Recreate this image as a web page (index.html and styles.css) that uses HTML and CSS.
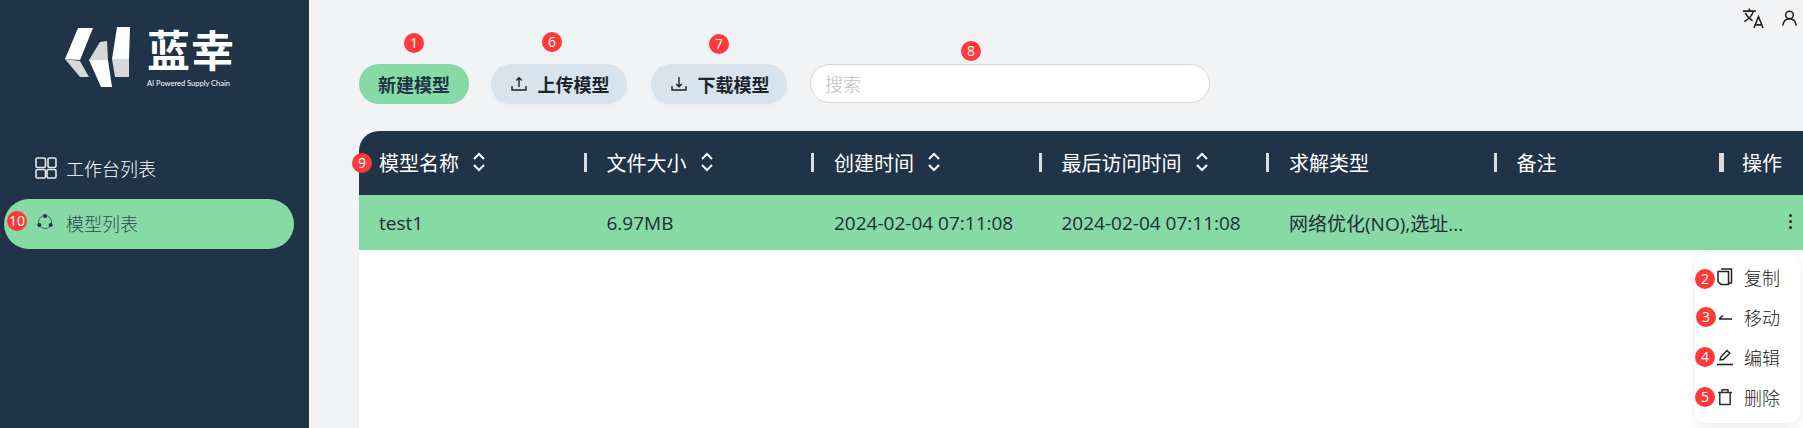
FILE: index.html
```html
<!DOCTYPE html>
<html lang="zh">
<head>
<meta charset="utf-8">
<title>模型列表</title>
<link rel="stylesheet" href="styles.css">
</head>
<body>
<div class="app">
  <aside class="sidebar">
    <div class="logo">
      <svg class="logo-mark" width="70" height="62" viewBox="0 0 70 62">
        <path d="M13 1H28L15 33L0 32Z" fill="#fff"/>
        <path d="M0 32L15 34L24 50H15Z" fill="#d5d9dc"/>
        <path d="M35 15L42 14L43 33H24Z" fill="#d5d9dc"/>
        <path d="M24 33H43L47 60H36Z" fill="#fff"/>
        <path d="M52 0H65L64 32H47Z" fill="#fff"/>
        <path d="M47 32H64V50H50Z" fill="#d5d9dc"/>
      </svg>
      <div class="logo-text">
        <div class="logo-name">蓝幸</div>
        <div class="logo-sub">AI Powered Supply Chain</div>
      </div>
    </div>
    <nav class="nav">
      <div class="nav-item">
        <svg class="nav-icon" width="22" height="22" viewBox="0 0 22 22" fill="none" stroke="#e6e9ec" stroke-width="1.6">
          <rect x="1" y="1" width="9.5" height="9.5" rx="1.5"/>
          <rect x="13" y="1" width="8" height="9.5" rx="1.5"/>
          <rect x="1" y="12.5" width="9.5" height="8.5" rx="1.5"/>
          <rect x="12" y="12.5" width="9" height="8.5" rx="1.5"/>
        </svg>
        <span>工作台列表</span>
      </div>
      <div class="nav-item active">
        <span class="badge badge-10">10</span>
        <svg class="nav-icon" width="22" height="22" viewBox="0 0 22 22" fill="none" stroke="#4a6670" stroke-width="1">
          <circle cx="10" cy="10" r="6.5"/>
          <circle cx="10" cy="4" r="2" fill="#203347" stroke="none"/>
          <circle cx="4.3" cy="13" r="2" fill="#203347" stroke="none"/>
          <circle cx="15.7" cy="13" r="2" fill="#203347" stroke="none"/>
        </svg>
        <span>模型列表</span>
      </div>
    </nav>
  </aside>
  <main class="main">
    <div class="topbar">
      <svg width="22" height="22" viewBox="0 0 24 24" fill="none" stroke="#222" stroke-width="1.7">
        <path d="M1 4.5H15M8 1.5V4.5M12.5 4.5C11 9 7 13.5 2.5 16M3.5 6.5C5.5 10.5 8 13 11.5 15"/>
        <path d="M13 23L18 10.5L23 23M14.5 19.5H21.5"/>
      </svg>
      <svg width="17" height="18" viewBox="0 0 20 20" fill="none" stroke="#222" stroke-width="1.8">
        <circle cx="10" cy="6.5" r="4.5"/>
        <path d="M2 19C3 13.5 6.5 11 10 11S17 13.5 18 19"/>
      </svg>
    </div>
    <div class="toolbar">
      <button class="btn btn-green"><span class="badge badge-1">1</span>新建模型</button>
      <button class="btn btn-blue">
        <span class="badge badge-6">6</span>
        <svg width="16" height="16" viewBox="0 0 16 16" fill="none" stroke="#222" stroke-width="1.4"><path d="M8 11V2M5.2 4.6L8 1.8L10.8 4.6M1 10V14H15V10"/></svg>
        上传模型
      </button>
      <button class="btn btn-blue">
        <span class="badge badge-7">7</span>
        <svg width="16" height="16" viewBox="0 0 16 16" fill="none" stroke="#222" stroke-width="1.4"><path d="M8 1V10.5M5.2 8L8 10.8L10.8 8M1 10V14H15V10"/></svg>
        下载模型
      </button>
      <div class="search">
        <span class="badge badge-8">8</span>
        <input class="search-input" placeholder="搜索">
      </div>
    </div>
    <section class="table">
      <div class="thead">
        <div class="th"><span class="badge badge-9">9</span><span class="th-text">模型名称</span><svg class="sort" width="14" height="20" viewBox="0 0 14 20" fill="none" stroke="#fff" stroke-width="2"><path d="M2 7L7 2L12 7M2 13L7 18L12 13"/></svg></div>
        <div class="th"><span class="th-text">文件大小</span><svg class="sort" width="14" height="20" viewBox="0 0 14 20" fill="none" stroke="#fff" stroke-width="2"><path d="M2 7L7 2L12 7M2 13L7 18L12 13"/></svg></div>
        <div class="th"><span class="th-text">创建时间</span><svg class="sort" width="14" height="20" viewBox="0 0 14 20" fill="none" stroke="#fff" stroke-width="2"><path d="M2 7L7 2L12 7M2 13L7 18L12 13"/></svg></div>
        <div class="th"><span class="th-text">最后访问时间</span><svg class="sort" width="14" height="20" viewBox="0 0 14 20" fill="none" stroke="#fff" stroke-width="2"><path d="M2 7L7 2L12 7M2 13L7 18L12 13"/></svg></div>
        <div class="th"><span class="th-text">求解类型</span></div>
        <div class="th th-wide"><span class="th-text">备注</span></div>
        <div class="th th-last"><span class="th-text">操作</span></div>
      </div>
      <div class="trow">
        <div class="td">test1</div>
        <div class="td">6.97MB</div>
        <div class="td">2024-02-04 07:11:08</div>
        <div class="td">2024-02-04 07:11:08</div>
        <div class="td">网络优化(NO),选址...</div>
        <div class="td"></div>
        <div class="td td-last"><span class="dots"><i></i><i></i><i></i></span></div>
      </div>
      <div class="menu">
        <div class="menu-item">
          <span class="badge badge-2">2</span>
          <svg width="16" height="18" viewBox="0 0 16 18" fill="none" stroke="#222" stroke-width="1.5"><path d="M4 1H14.5V15H12"/><path d="M1 3.5H11.5V16.5H4L1 13.5Z"/></svg>
          <span>复制</span>
        </div>
        <div class="menu-item">
          <span class="badge badge-3">3</span>
          <svg width="16" height="18" viewBox="0 0 16 18" fill="none" stroke="#222" stroke-width="1.5"><path d="M2 11H15M2 11L6 7.5"/></svg>
          <span>移动</span>
        </div>
        <div class="menu-item">
          <span class="badge badge-4">4</span>
          <svg width="16" height="18" viewBox="0 0 16 18" fill="none" stroke="#222" stroke-width="1.4"><path d="M3 12L3.8 9L10 2.5L12.8 5.2L6.3 11.5Z"/><path d="M0 16.5H16" stroke-width="1.6"/></svg>
          <span>编辑</span>
        </div>
        <div class="menu-item">
          <span class="badge badge-5">5</span>
          <svg width="16" height="18" viewBox="0 0 16 18" fill="none" stroke="#333" stroke-width="1.5"><path d="M1 4.5H15M5 4.5V1.8H11V4.5M2.8 4.5V16.5H13.2V4.5"/></svg>
          <span>删除</span>
        </div>
      </div>
    </section>
  </main>
</div>
</body>
</html>
```
FILE: styles.css
```css
* { box-sizing: border-box; }
html, body { margin: 0; height: 100%; overflow: hidden; }
body {
  font-family: "Open Sans", "Noto Sans CJK SC", sans-serif;
  background: #f2f3f5;
  color: #222;
}
.app { display: flex; height: 428px; }

.sidebar {
  width: 309px;
  flex: none;
  background: #203347;
  display: flex;
  flex-direction: column;
  padding-top: 27px;
}
.logo { display: flex; justify-content: flex-start; padding-left: 65px; gap: 12px; height: 117px; }
.logo-mark { flex: none; }
.logo-text { display: flex; flex-direction: column; }
.logo-name {
  font-size: 43px;
  line-height: 42px;
  font-weight: 700;
  color: #fff;
  letter-spacing: 1px;
  font-family: "Noto Sans CJK SC", sans-serif;
}
.logo-sub { font-size: 7.5px; line-height: 10px; color: #fff; margin-top: 10px; white-space: nowrap; font-family: "Lato", sans-serif; }

.nav { display: flex; flex-direction: column; padding-left: 4px; }
.nav-item {
  position: relative;
  width: 290px;
  height: 50px;
  display: flex;
  align-items: center;
  gap: 9px;
  padding: 0 0 2px 31px;
  font-size: 18px;
  font-weight: 300;
  color: #fff;
  font-family: "Noto Sans CJK SC", sans-serif;
  margin-bottom: 5px;
}
.nav-icon { flex: none; }
.nav-item.active { background: #87d9a5; color: #2f4a56; border-radius: 25px; }

.main { flex: 1; min-width: 0; position: relative; padding-left: 50px; display: flex; flex-direction: column; }
.topbar {
  position: absolute;
  top: 7px;
  right: 5px;
  display: flex;
  gap: 17px;
  align-items: center;
}
.toolbar { display: flex; align-items: flex-start; padding-top: 64px; gap: 24px; height: 131px; }
.btn {
  position: relative;
  height: 40px;
  border: none;
  border-radius: 20px;
  font: 700 18px "Noto Sans CJK SC", sans-serif;
  color: #203347;
  display: flex;
  align-items: center;
  justify-content: center;
  padding: 0;
}
.btn-green { width: 110px; background: #87d9a5; margin-right: -2px; }
.btn-blue { width: 136px; background: #d7e3ed; color: #1b2530; gap: 11px; padding-left: 2px; box-shadow: 0 2px 4px rgba(0,0,0,.04); }
.search { position: relative; margin-left: -1px; }
.search-input {
  display: block;
  width: 400px;
  height: 39px;
  border: 1px solid #d8d8d8;
  border-radius: 20px;
  background: #fff;
  padding: 0 14px 2px;
  font: 300 18px "Noto Sans CJK SC", sans-serif;
  outline: none;
}
.search-input::placeholder { color: #c0c0c0; }

.table { flex: 1; background: #fff; position: relative; border-top-left-radius: 20px; }
.thead, .trow { display: grid; grid-template-columns: repeat(6, 227.5px) 1fr; }
.thead { height: 64px; background: #203347; border-top-left-radius: 20px; }
.trow { height: 55px; background: #87d9a5; }
.th {
  position: relative;
  display: flex;
  align-items: center;
  gap: 13px;
  padding: 0 0 2px 20px;
  color: #fff;
  font-size: 20px;
  font-family: "Noto Sans CJK SC", sans-serif;
}
.th::after {
  content: "";
  position: absolute;
  right: 0;
  top: 22px;
  width: 3px;
  height: 19px;
  background: #dcdcdc;
}
.th-wide::after { width: 5px; }
.th-last { padding-left: 18px; }
.th-last::after { display: none; }
.td {
  display: flex;
  align-items: center;
  padding-left: 20px;
  font-size: 19px;
  font-family: "Open Sans", "Noto Sans CJK SC", sans-serif;
  color: #222d38;
  white-space: nowrap;
}
.td-last { justify-content: flex-end; padding-right: 11px; }
.dots { display: flex; flex-direction: column; gap: 3px; padding-bottom: 3px; }
.dots i { display: block; width: 3px; height: 3px; border-radius: 50%; background: #222; }

.menu {
  position: absolute;
  right: 3px;
  top: 123px;
  width: 105px;
  height: 169px;
  background: #fff;
  border-radius: 10px;
  box-shadow: 0 4px 12px rgba(0,0,0,.08);
  padding: 3px 0 0 22px;
  display: flex;
  flex-direction: column;
}
.menu-item {
  position: relative;
  height: 40px;
  display: flex;
  align-items: center;
  gap: 11px;
  font-size: 18px;
  font-weight: 300;
  font-family: "Noto Sans CJK SC", sans-serif;
  color: #222;
}

.badge {
  position: absolute;
  width: 20px;
  height: 20px;
  border-radius: 50%;
  background: #ff3838;
  color: #fff;
  font: 14px/20px "Open Sans", sans-serif;
  text-align: center;
}
.badge-1 { left: 45px; top: -31px; }
.badge-6 { left: 51px; top: -32px; }
.badge-7 { left: 58px; top: -30px; }
.badge-8 { left: 151px; top: -23px; }
.badge-9 { left: -7px; top: 22px; }
.badge-10 { left: 3px; top: 12px; }
.badge-2 { left: -22px; top: 12px; }
.badge-3 { left: -21px; top: 10px; }
.badge-4 { left: -22px; top: 10px; }
.badge-5 { left: -22px; top: 10px; }
```
